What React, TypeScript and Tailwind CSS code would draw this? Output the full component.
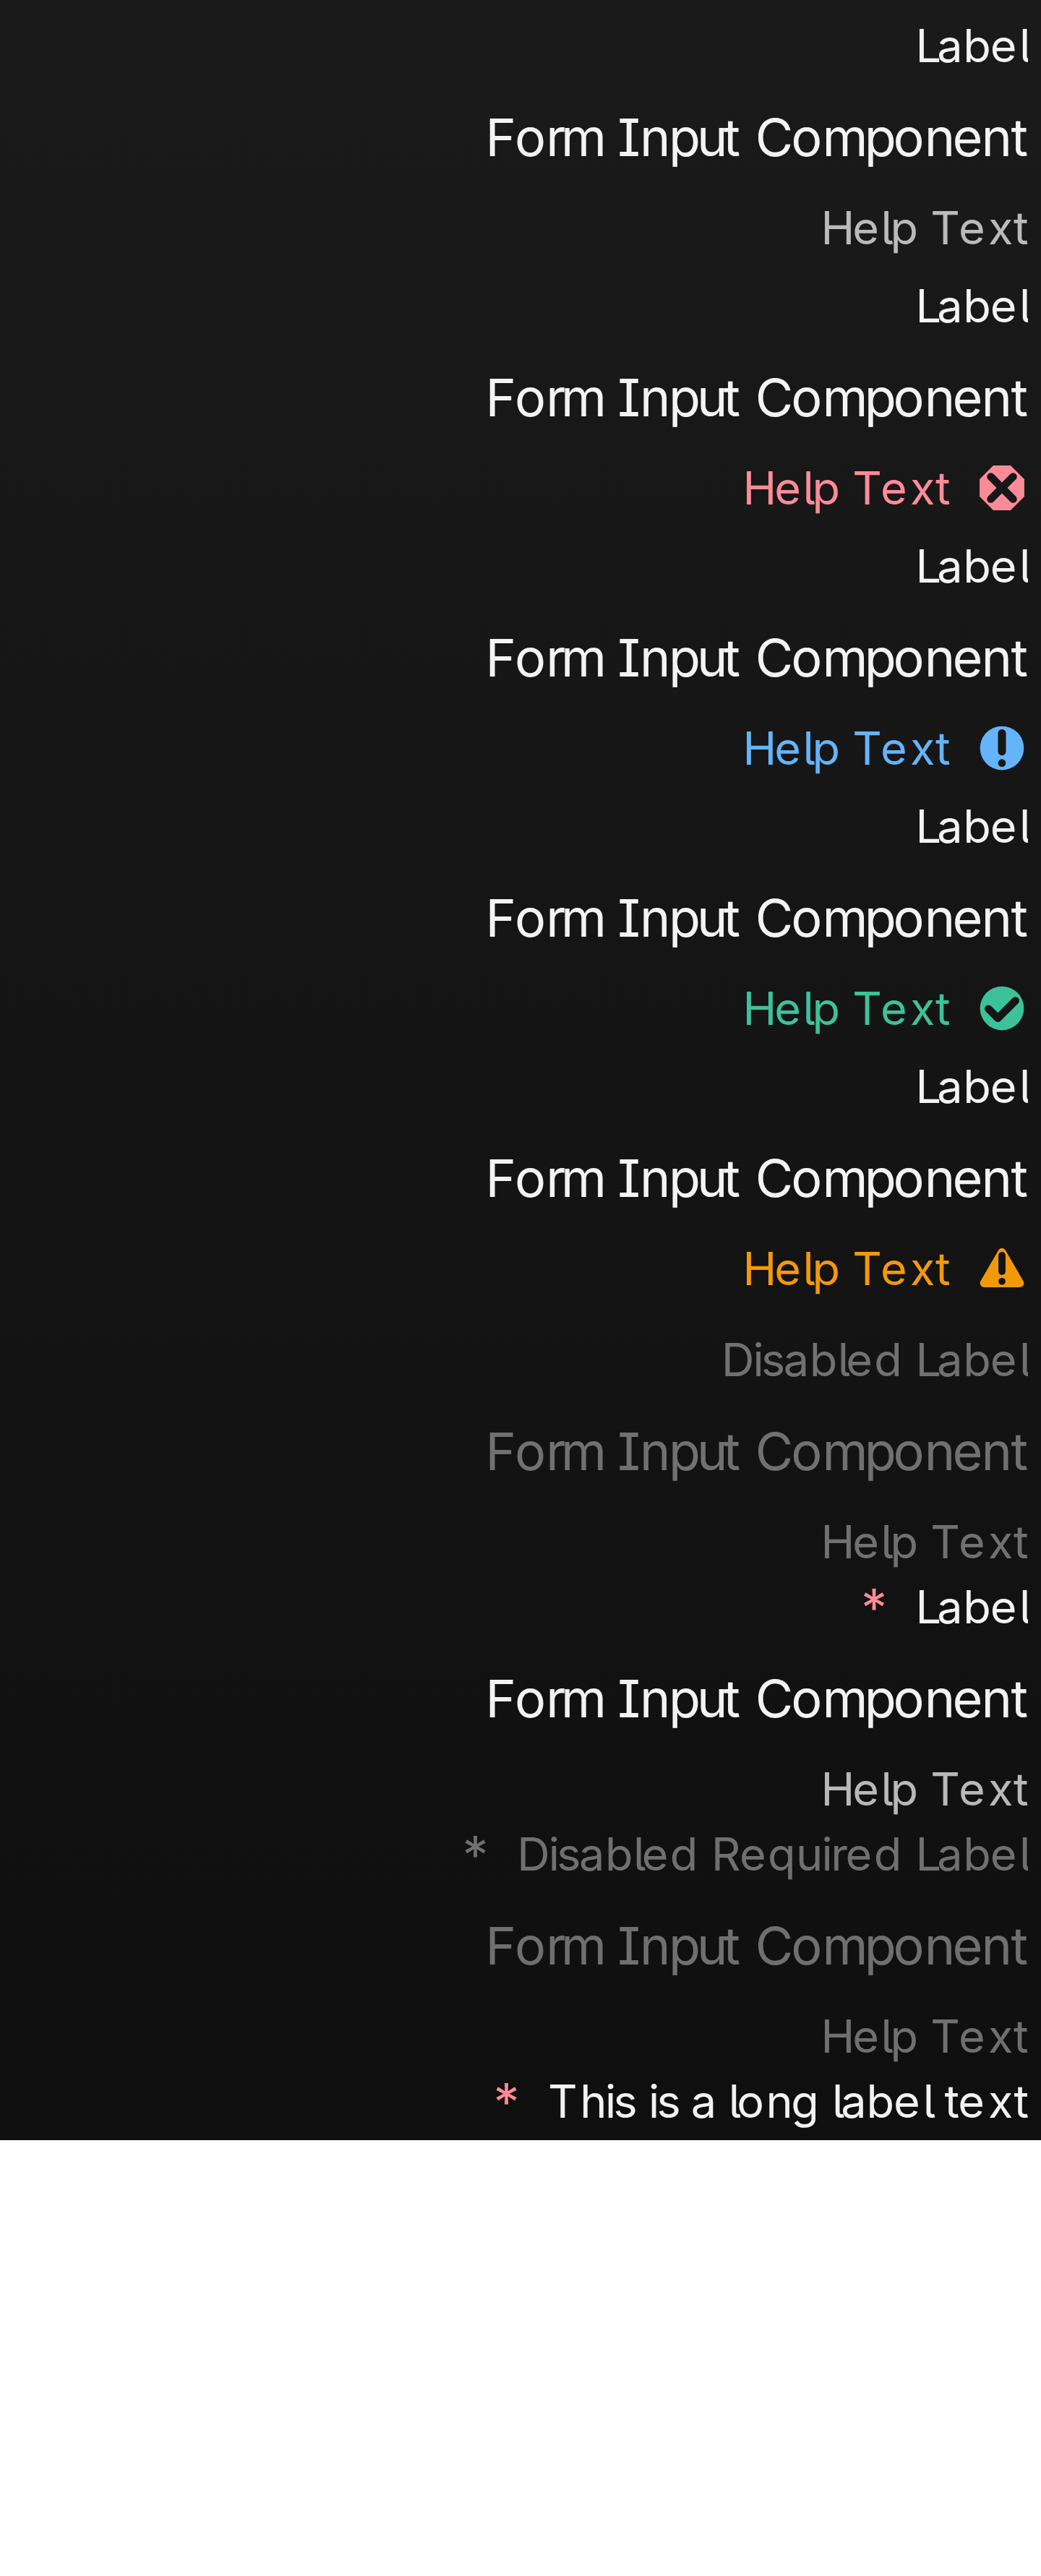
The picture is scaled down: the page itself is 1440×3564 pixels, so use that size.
import { useId } from "react";

type Status = "error" | "info" | "success" | "warning";

type FieldProps = {
  label: string;
  status?: Status;
  disabled?: boolean;
  required?: boolean;
};

const UNIT = 4.5;

const statusColor: Record<Status, string> = {
  error: "text-[#fc8b98]",
  info: "text-[#64b4fa]",
  success: "text-[#3cc29a]",
  warning: "text-[#f2990a]",
};

// Start of each glyph along its line, followed by the full width of the line.
const tracking: Record<string, number[]> = {
  "Form Input Component": [
    0, 39.6, 83.8, 104.8, 165, 183.1, 213.8, 253.8, 292.8, 328.9, 353, 373.8, 423.3, 466.5, 524.8, 563.3, 607.8,
    646.6, 686.8, 726.6, 751.3,
  ],
  "Help Text": [0, 43.6, 83, 96, 135, 151.8, 190.6, 231.7, 266.9, 286.8],
  Label: [0, 29.7, 65.6, 103.3, 143.6, 155.5],
  "Disabled Label": [0, 43.7, 55.2, 86, 122, 161, 172.6, 211.5, 249, 269, 298.7, 334.6, 372.3, 412.6, 424.5],
  "Disabled Required Label": [
    0, 43.7, 55.2, 86, 122, 161, 172.8, 211.8, 249, 269, 308.3, 347.3, 386.2, 421.7, 434.5, 454.9, 494, 532, 552,
    581.7, 617.6, 655.3, 695.6, 707.5,
  ],
  "This is a long label text": [
    0, 44.2, 79.2, 90.7, 124, 139.2, 150.7, 184, 198.2, 234, 250.1, 261.8, 302.1, 336.8, 375, 393.5, 405.8, 441.2,
    478.8, 519.5, 536, 549.4, 568.2, 609.9, 645.4, 665,
  ],
};

function Tracked({ text }: { text: string }) {
  const stops = tracking[text];
  return (
    <>
      {[...text].map((char, i) => (
        <span key={i} className="inline-block whitespace-pre" style={{ width: (stops[i + 1] - stops[i]) / UNIT }}>
          {char}
        </span>
      ))}
    </>
  );
}

function StatusIcon({ status }: { status: Status }) {
  const id = useId();
  return (
    <svg viewBox="0 0 32 32" className="h-4 w-4 shrink-0" fill="currentColor">
      <mask id={id} maskUnits="userSpaceOnUse" x="0" y="0" width="32" height="32">
        <rect width="32" height="32" fill="white" />
        {status === "error" && (
          <path d="M9.15 9.15 22.85 22.85M22.85 9.15 9.15 22.85" stroke="black" strokeWidth="4.7" strokeLinecap="round" />
        )}
        {status === "info" && (
          <g fill="black">
            <rect x="13.55" y="4.4" width="4.9" height="16.1" rx="2.45" />
            <circle cx="16" cy="25.2" r="2.4" />
          </g>
        )}
        {status === "success" && (
          <path d="M7.7 16.3 13.5 22.1 24.3 11.3" fill="none" stroke="black" strokeWidth="4.7" strokeLinecap="round" strokeLinejoin="round" />
        )}
        {status === "warning" && (
          <g fill="black">
            <rect x="13.8" y="5.8" width="4.4" height="14.2" rx="2.2" />
            <circle cx="16" cy="23.9" r="2.15" />
          </g>
        )}
      </mask>
      <g mask={`url(#${id})`}>
        {status === "error" && (
          <path d="M10.7 2.25h10.6l8.45 8.45v10.6l-8.45 8.45H10.7L2.25 21.3V10.7z" />
        )}
        {(status === "info" || status === "success") && <circle cx="16" cy="16" r="13.5" />}
        {status === "warning" && (
          <path d="M16 6 27 25H5z" stroke="currentColor" strokeWidth="5" strokeLinejoin="round" />
        )}
      </g>
    </svg>
  );
}

function Label({ text, disabled, required }: { text: string; disabled?: boolean; required?: boolean }) {
  return (
    <div className="flex h-5 items-center justify-end gap-2 text-[14px] leading-5">
      {required && (
        <span className={`w-[8.8px] text-[16px] leading-6 ${disabled ? "" : "text-[#fc8b98]"}`}>*</span>
      )}
      <span className="overflow-hidden whitespace-nowrap">
        <Tracked text={text} />
      </span>
    </div>
  );
}

function Field({ label, status, disabled, required }: FieldProps) {
  const tone = disabled ? "text-white/40" : "text-white/95";
  const helpTone = status ? statusColor[status] : disabled ? "" : "text-white/70";
  return (
    <div className={`flex h-[76px] shrink-0 flex-col gap-1.5 whitespace-nowrap ${tone}`}>
      <Label text={label} disabled={disabled} required={required} />
      <div className="text-right text-[16px] leading-6">
        <Tracked text="Form Input Component" />
      </div>
      <div className={`flex items-center justify-end gap-2 text-[14px] leading-5 ${helpTone}`}>
        <span>
          <Tracked text="Help Text" />
        </span>
        {status && <StatusIcon status={status} />}
      </div>
    </div>
  );
}

export default function App() {
  return (
    <div className="h-[3564px] w-[1440px] overflow-hidden bg-white">
      <div className="h-[658px] w-80 origin-top-left scale-[4.5] bg-linear-to-b from-[#1a1a1a] to-[#0f0f0f] px-1 pt-1 font-['Inter',sans-serif] [font-feature-settings:'cv05','cv08']">
        <div className="flex flex-col gap-1">
          <Field label="Label" />
          <Field label="Label" status="error" />
          <Field label="Label" status="info" />
          <Field label="Label" status="success" />
          <Field label="Label" status="warning" />
        </div>
        <div className="flex flex-col pt-2">
          <Field label="Disabled Label" disabled />
          <Field label="Label" required />
          <Field label="Disabled Required Label" required disabled />
          <div className="text-white/95">
            <Label text="This is a long label text" required />
          </div>
        </div>
      </div>
    </div>
  );
}
